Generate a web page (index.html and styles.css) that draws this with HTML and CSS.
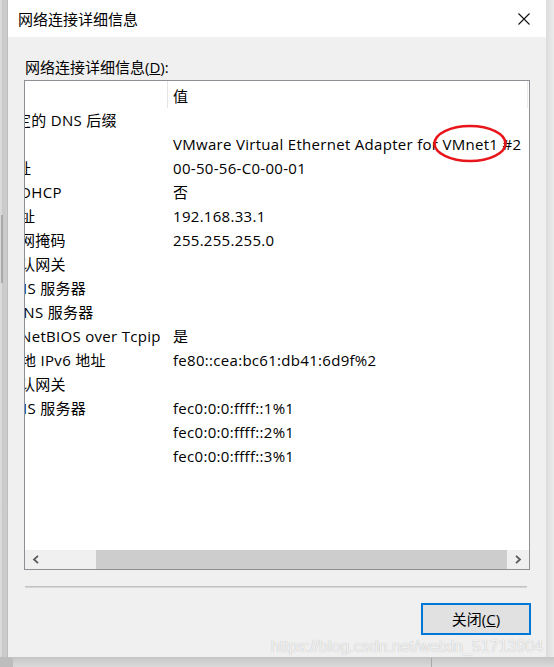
FILE: index.html
```html
<!DOCTYPE html>
<html lang="zh-CN">
<head>
<meta charset="utf-8">
<title>网络连接详细信息</title>
<link rel="stylesheet" href="styles.css">
</head>
<body>
<div class="screen">
  <div class="side-left"><div class="side-thumb"></div></div>
  <div class="dialog">
    <div class="titlebar">
      <span class="title">网络连接详细信息</span>
      <span class="close" aria-label="关闭">
        <svg width="12" height="12" viewBox="0 0 12 12"><path d="M0.5 0.5 L11.5 11.5 M11.5 0.5 L0.5 11.5" stroke="#111" stroke-width="1.1" fill="none"/></svg>
      </span>
    </div>
    <div class="content">
      <div class="field-label">网络连接详细信息(<u>D</u>):</div>
      <div class="listbox">
        <div class="list-viewport">
          <div class="grid">
            <div class="hcell hname">属性</div><div class="hcell hvalue">值</div>
            <div class="cell name">连接特定的 DNS 后缀</div><div class="cell value"></div>
            <div class="cell name">描述</div><div class="cell value">VMware Virtual Ethernet Adapter for VMnet1 #2</div>
            <div class="cell name">物理地址</div><div class="cell value">00-50-56-C0-00-01</div>
            <div class="cell name">已启用 DHCP</div><div class="cell value">否</div>
            <div class="cell name">IPv4 地址</div><div class="cell value">192.168.33.1</div>
            <div class="cell name">IPv4 子网掩码</div><div class="cell value">255.255.255.0</div>
            <div class="cell name">IPv4 默认网关</div><div class="cell value"></div>
            <div class="cell name">IPv4 DNS 服务器</div><div class="cell value"></div>
            <div class="cell name">IPv4 WINS 服务器</div><div class="cell value"></div>
            <div class="cell name">已启用 NetBIOS over Tcpip</div><div class="cell value">是</div>
            <div class="cell name">连接-本地 IPv6 地址</div><div class="cell value">fe80::cea:bc61:db41:6d9f%2</div>
            <div class="cell name">IPv6 默认网关</div><div class="cell value"></div>
            <div class="cell name">IPv6 DNS 服务器</div><div class="cell value">fec0:0:0:ffff::1%1</div>
            <div class="cell name"></div><div class="cell value">fec0:0:0:ffff::2%1</div>
            <div class="cell name"></div><div class="cell value">fec0:0:0:ffff::3%1</div>
          </div>
        </div>
        <div class="hscroll">
          <div class="sb-btn">
            <svg width="8" height="9" viewBox="0 0 8 9"><polyline points="6,0.8 2,4.5 6,8.2" fill="none" stroke="#5a5a5a" stroke-width="1.8"/></svg>
          </div>
          <div class="sb-track"><div class="sb-thumb"></div></div>
          <div class="sb-btn">
            <svg width="8" height="9" viewBox="0 0 8 9"><polyline points="2,0.8 6,4.5 2,8.2" fill="none" stroke="#5a5a5a" stroke-width="1.8"/></svg>
          </div>
        </div>
      </div>
      <div class="separator"></div>
      <div class="actions">
        <button class="btn" type="button">关闭(<u>C</u>)</button>
      </div>
    </div>
  </div>
  <div class="side-right"></div>
</div>
<div class="bottom-strip"></div>
<svg class="annotation" width="75" height="40" viewBox="0 0 75 40"><ellipse cx="37" cy="19.5" rx="35.5" ry="17.5" fill="none" stroke="#e8161b" stroke-width="2.6"/></svg>
<div class="watermark">https://blog.csdn.net/weixin_51713904</div>
</body>
</html>
```

FILE: styles.css
```css
html, body {
  margin: 0;
  padding: 0;
}

body {
  position: relative;
  width: 554px;
  height: 667px;
  overflow: hidden;
  background: #d6d6d6;
  font-family: "Open Sans", "Noto Sans CJK SC", sans-serif;
  font-size: 15px;
  color: #000;
}

.screen {
  display: flex;
  height: 657px;
}

.side-left {
  width: 8px;
  box-sizing: border-box;
  padding-top: 215px;
  background: linear-gradient(to right, #dadada 0, #dadada 2px, #c8c8c8 2px, #cfcfcf 8px);
}

.side-thumb {
  width: 2px;
  height: 68px;
  margin-left: 1px;
  background: #a9a9a9;
}

.dialog {
  width: 538px;
  display: flex;
  flex-direction: column;
  background: #f0f0f0;
  box-shadow: -1px 0 0 #bdbdbd, 1px 0 0 #d2d2d2, 0 1px 0 #c4c4c4;
}

.side-right {
  flex: 1;
  background: linear-gradient(to right, #dcdcdc, #ececec);
}

.bottom-strip {
  height: 10px;
  background:
    linear-gradient(to right, transparent 431px, #a8a8a8 431px, #a8a8a8 432px, transparent 432px),
    linear-gradient(to right, #bdbdbd 0, #bdbdbd 13px, transparent 13px),
    linear-gradient(to bottom, #c6c6c6, #dadada);
}

.titlebar {
  height: 37px;
  flex: none;
  display: flex;
  align-items: center;
  justify-content: space-between;
  padding: 0 16px 0 10px;
  background: #fff;
}

.title {
  line-height: 20px;
}

.close {
  display: flex;
  width: 12px;
  height: 12px;
}

.content {
  flex: 1;
  display: flex;
  flex-direction: column;
  padding: 20px 15px 22px 16px;
}

.field-label {
  line-height: 20px;
  padding-left: 1px;
}

.listbox {
  margin-top: 3px;
  width: 506px;
  height: 490px;
  box-sizing: border-box;
  border: 1px solid #8e8f94;
  background: #fff;
  display: flex;
  flex-direction: column;
}

.list-viewport {
  flex: 1;
  overflow: hidden;
}

.grid {
  display: grid;
  grid-template-columns: 204px 360px;
  grid-template-rows: 27px;
  grid-auto-rows: 24px;
  margin-left: -61px;
  width: 564px;
  letter-spacing: 0.3px;
}

.hcell {
  box-sizing: border-box;
  padding-top: 3px;
  line-height: 24px;
  white-space: nowrap;
  overflow: hidden;
  border-right: 1px solid #e5e5e5;
}

.hname {
  padding-left: 6px;
  color: transparent;
}

.hvalue {
  padding-left: 5px;
  border-right-color: #ececec;
}

.cell {
  line-height: 24px;
  white-space: nowrap;
}

.name {
  padding-left: 6px;
  overflow: hidden;
}

.value {
  padding-left: 5px;
}

.hscroll {
  flex: none;
  height: 19px;
  display: flex;
  background: #f0f0f0;
}

.sb-btn {
  width: 22px;
  display: flex;
  align-items: center;
  justify-content: center;
}

.sb-track {
  flex: 1;
  display: flex;
}

.sb-thumb {
  flex: 1;
  margin-left: 49px;
  background: #cdcdcd;
}

.separator {
  margin: 16px 4px 0 1px;
  height: 0;
  border-top: 1px solid #c2c2c2;
  border-bottom: 1px solid #d6d6d6;
}

.actions {
  margin-top: 15px;
  display: flex;
  justify-content: flex-end;
}

.btn {
  width: 110px;
  height: 32px;
  box-sizing: border-box;
  border: 2px solid #0078d7;
  background: #e1e1e1;
  font-family: inherit;
  font-size: 15px;
  color: #000;
  padding: 0;
  line-height: 26px;
}

.annotation {
  position: absolute;
  left: 433px;
  top: 124px;
}

.watermark {
  position: absolute;
  left: 271px;
  top: 638px;
  font-family: "Liberation Sans", Arial, sans-serif;
  font-size: 16px;
  line-height: 18px;
  white-space: nowrap;
  color: rgba(250, 250, 250, 0.9);
  text-shadow: 0 0 1px rgba(0, 0, 0, 0.3);
}
```
